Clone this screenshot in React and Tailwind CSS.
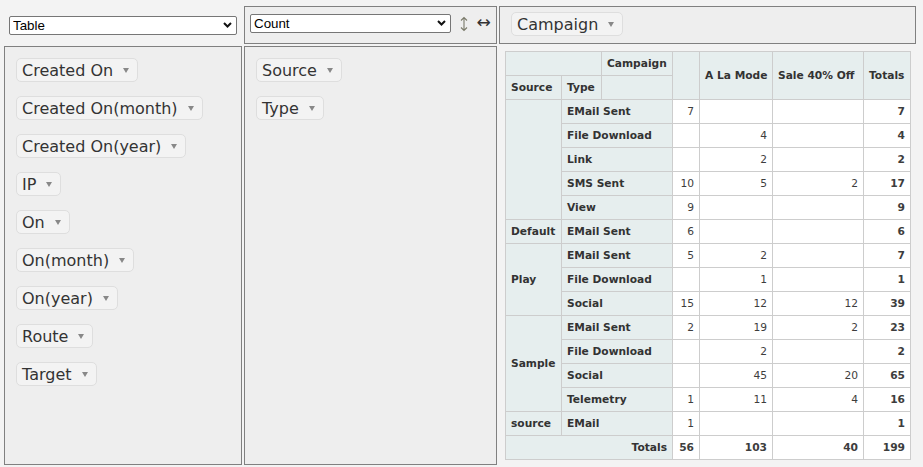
import React from "react";

const Chevron = () => (
  <svg
    width="9"
    height="6"
    viewBox="0 0 9 6"
    className="pointer-events-none absolute right-[5px] top-[6px]"
  >
    <path d="M1 1L4.5 4.5L8 1" fill="none" stroke="#111" strokeWidth="2" />
  </svg>
);

function Select({ value, className }) {
  return (
    <div className={"relative " + className}>
      <select
        defaultValue={value}
        className="block h-full w-full appearance-none rounded-[2px] border border-[#767676] bg-white pl-[3px] font-['Liberation_Sans',Arial,sans-serif] text-[13.33px] leading-[15px] text-black outline-none"
      >
        <option>{value}</option>
      </select>
      <Chevron />
    </div>
  );
}

const Pill = ({ label }) => (
  <span className="inline-flex h-[24px] items-center whitespace-nowrap rounded-[5px] border border-[#dedede] bg-[#f3f3f3] pl-[5px] pr-[5px] pt-[2px] text-[16px] leading-[18px] text-[#333]">
    {label}
    <svg width="6" height="5" viewBox="0 0 6 5" className="mb-[1px] ml-[10px] mr-[3px]">
      <path d="M0 0H6L3 5Z" fill="#888" />
    </svg>
  </span>
);

const unused = [
  "Created On",
  "Created On(month)",
  "Created On(year)",
  "IP",
  "On",
  "On(month)",
  "On(year)",
  "Route",
  "Target",
];

const groups = [
  {
    src: "",
    rows: [
      ["EMail Sent", ["7", "", "", "7"]],
      ["File Download", ["", "4", "", "4"]],
      ["Link", ["", "2", "", "2"]],
      ["SMS Sent", ["10", "5", "2", "17"]],
      ["View", ["9", "", "", "9"]],
    ],
  },
  { src: "Default", rows: [["EMail Sent", ["6", "", "", "6"]]] },
  {
    src: "Play",
    rows: [
      ["EMail Sent", ["5", "2", "", "7"]],
      ["File Download", ["", "1", "", "1"]],
      ["Social", ["15", "12", "12", "39"]],
    ],
  },
  {
    src: "Sample",
    rows: [
      ["EMail Sent", ["2", "19", "2", "23"]],
      ["File Download", ["", "2", "", "2"]],
      ["Social", ["", "45", "20", "65"]],
      ["Telemetry", ["1", "11", "4", "16"]],
    ],
  },
  { src: "source", rows: [["EMail", ["1", "", "", "1"]]] },
];

const TH =
  "border border-[#cdcdcd] bg-[#e6eeee] p-[5px] text-left align-middle font-bold text-[#333] whitespace-nowrap";
const TD =
  "border border-[#cdcdcd] bg-white p-[5px] text-right align-top text-[#3d3d3d] whitespace-nowrap";
const TDB =
  "border border-[#cdcdcd] bg-white p-[5px] text-right align-top font-bold text-[#3d3d3d] whitespace-nowrap";

function PivotTable() {
  return (
    <table className="w-[406px] table-fixed border-collapse text-[10.67px] leading-[13px]">
      <colgroup>
        <col className="w-[56px]" />
        <col className="w-[40px]" />
        <col className="w-[71px]" />
        <col className="w-[27px]" />
        <col className="w-[73px]" />
        <col className="w-[91px]" />
        <col className="w-[47px]" />
      </colgroup>
      <thead>
        <tr>
          <th colSpan={2} className={TH}></th>
          <th className={TH}>Campaign</th>
          <th rowSpan={2} className={TH + " text-center"}></th>
          <th rowSpan={2} className={TH + " text-center"}>
            A La Mode
          </th>
          <th rowSpan={2} className={TH + " text-center"}>
            Sale 40% Off
          </th>
          <th rowSpan={2} className={TH + " text-center"}>
            Totals
          </th>
        </tr>
        <tr>
          <th className={TH}>Source</th>
          <th className={TH}>Type</th>
          <th className={TH}></th>
        </tr>
      </thead>
      <tbody>
        {groups.map((g, gi) =>
          g.rows.map((r, ri) => (
            <tr key={gi + "-" + ri}>
              {ri === 0 && (
                <th rowSpan={g.rows.length} className={TH}>
                  {g.src}
                </th>
              )}
              <th colSpan={2} className={TH}>
                {r[0]}
              </th>
              <td className={TD}>{r[1][0]}</td>
              <td className={TD}>{r[1][1]}</td>
              <td className={TD}>{r[1][2]}</td>
              <td className={TDB}>{r[1][3]}</td>
            </tr>
          ))
        )}
        <tr>
          <th colSpan={3} className={TH + " !text-right"}>
            Totals
          </th>
          <td className={TDB}>56</td>
          <td className={TDB}>103</td>
          <td className={TDB}>40</td>
          <td className={TDB}>199</td>
        </tr>
      </tbody>
    </table>
  );
}

export default function App() {
  return (
    <div className="h-[467px] w-[923px] overflow-hidden bg-[#f3f3f3] pl-[4px] pt-[6px] font-['DejaVu_Sans',Verdana,sans-serif] text-[#333]">
      <div className="grid grid-cols-[238px_253px_417px] grid-rows-[38px_419px] gap-[2px]">
        <div className="flex items-center px-[5px]">
          <Select value="Table" className="h-[19px] w-full" />
        </div>
        <div className="flex items-start border border-[#808080] bg-[#eee] pl-[5px] pt-[7px]">
          <Select value="Count" className="h-[19px] w-[201px]" />
          <span role="button" aria-label="↕" className="ml-[5px] mt-[2px] inline-block w-[15px]">
            <svg width="15" height="16" viewBox="0 0 15 16">
              <path
                d="M8 1.5V14.5M5 4.5L8 1.5L11 4.5M5 11.5L8 14.5L11 11.5"
                fill="none"
                stroke="#7a7a6a"
                strokeWidth="1.1"
              />
            </svg>
          </span>
          <span className="ml-[5px] inline-block w-[15px] text-center text-[17px] leading-[17px] text-[#333]">
            ↔
          </span>
        </div>
        <div className="border border-[#808080] bg-[#eee] pl-[11px] pt-[5px]">
          <Pill label="Campaign" />
        </div>
        <div className="border border-[#808080] bg-[#eee] pt-[5px]">
          <ul className="flex flex-col">
            {unused.map((u) => (
              <li key={u} className="h-[38px] pl-[11px] pt-[6px]">
                <Pill label={u} />
              </li>
            ))}
          </ul>
        </div>
        <div className="border border-[#808080] bg-[#eee] pt-[5px]">
          <ul className="flex flex-col">
            {["Source", "Type"].map((u) => (
              <li key={u} className="h-[38px] pl-[11px] pt-[6px]">
                <Pill label={u} />
              </li>
            ))}
          </ul>
        </div>
        <div className="pl-[6px] pt-[5px]">
          <PivotTable />
        </div>
      </div>
    </div>
  );
}
